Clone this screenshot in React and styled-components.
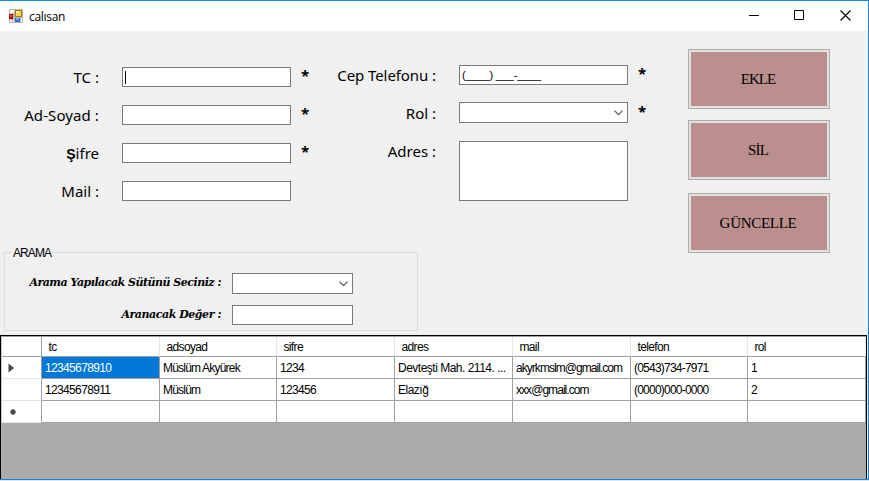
import React from "react";
import styled, { createGlobalStyle } from "styled-components";

const Global = createGlobalStyle`
  * { box-sizing: border-box; }
  body { margin: 0; overflow: hidden; background: #f0f0f0; }
`;

const Window = styled.div`
  width: 869px;
  height: 481px;
  display: flex;
  flex-direction: column;
  background: #f0f0f0;
  border-top: 1px solid #1883d7;
  border-right: 1px solid #1883d7;
  color: #000;
  font-family: "Liberation Sans", sans-serif;
`;

const TitleBar = styled.header`
  height: 30px;
  flex: none;
  display: flex;
  align-items: center;
  background: #fff;
  padding-left: 9px;
`;

const Title = styled.span`
  flex: 1;
  margin-left: 6px;
  padding-top: 1px;
  font: 12px/16px "Open Sans", sans-serif;
  letter-spacing: -0.3px;
`;

const WindowButton = styled.span`
  width: 46px;
  height: 30px;
  display: flex;
  align-items: center;
  justify-content: center;
`;

const Form = styled.main`
  height: 221px;
  flex: none;
  display: grid;
  grid-template-columns: 337px 351px 142px;
`;

const Column = styled.section`
  display: flex;
  flex-direction: column;
  gap: 18px;
  padding-top: ${(p) => p.$top}px;
`;

const Field = styled.div`
  display: grid;
  grid-template-columns: 99px 169px 1fr;
  column-gap: 23px;
  height: 20px;
`;

const Label = styled.label`
  font: 15px/20px "Noto Sans", sans-serif;
  letter-spacing: ${(p) => p.$track || 0}px;
  text-align: right;
  white-space: nowrap;
`;

const Initial = styled.span`
  font-family: "Liberation Sans", sans-serif;
  font-weight: 700;
  font-size: 14px;
`;

const TextBox = styled.div`
  height: ${(p) => p.$height || 20}px;
  margin-top: ${(p) => p.$shift || 0}px;
  display: flex;
  align-items: center;
  justify-content: ${(p) => (p.$combo ? "flex-end" : "flex-start")};
  padding: 0 ${(p) => (p.$combo ? 4 : 2)}px;
  background: #fff;
  border: 1px solid #7a7a7a;
  font-size: 11px;
  letter-spacing: -0.15px;
  white-space: pre;
`;

const Caret = styled.i`
  width: 1px;
  height: 13px;
  background: #000;
`;

const Star = styled.span`
  margin-left: -13px;
  font: 700 15px/16px "Noto Sans", sans-serif;
`;

const Actions = styled.nav`
  display: grid;
  grid-template-rows: 60px 60px 60px;
  row-gap: 12px;
  padding-top: 18px;
  align-content: start;
`;

const ActionButton = styled.button`
  width: 142px;
  height: 60px;
  margin: ${(p) => p.$shift || 0}px 0 0;
  padding: 0 2px 0 0;
  background: #bc8f8f;
  border: 1px solid #adadad;
  box-shadow: inset 0 0 0 2px #e1e1e1;
  color: #000;
  font: 15px/20px "Liberation Serif", serif;
  letter-spacing: ${(p) => p.$track}px;
`;

const Search = styled.fieldset`
  width: 414px;
  height: 85px;
  flex: none;
  margin: -6px 0 4px 4px;
  padding: 14px 0 0;
  border: 1px solid #dcdcdc;
  min-width: 0;
  display: flex;
  flex-direction: column;
  gap: 11px;
`;

const Legend = styled.legend`
  margin-left: 6px;
  padding: 1px 2px 0;
  height: 13px;
  font-size: 12px;
  line-height: 13px;
  letter-spacing: -0.9px;
`;

const SearchField = styled.div`
  display: grid;
  grid-template-columns: 216px 121px;
  column-gap: 11px;
`;

const SearchLabel = styled.label`
  font: italic 700 11px/19px "DejaVu Serif", serif;
  letter-spacing: ${(p) => p.$track}px;
  text-align: right;
  white-space: nowrap;
`;

const GridArea = styled.div`
  width: 867px;
  height: 144px;
  flex: none;
  background: #ababab;
  border: solid #000;
  border-width: 1px 1px 0 1px;
`;

const Table = styled.div`
  display: grid;
  grid-template-columns: 40px 118px 117px 118px 118px 118px 117px 118px;
  grid-template-rows: 20px 22px 22px 22px;
  width: 865px;
  border-top: 1px solid #a0a0a0;
  border-left: 1px solid #c8c8c8;
`;

const Cell = styled.div`
  display: flex;
  align-items: center;
  overflow: hidden;
  padding: 1px 0 0 ${(p) => (p.$head ? 6.5 : 3)}px;
  white-space: nowrap;
  font-size: 12px;
  line-height: 16px;
  letter-spacing: ${(p) => p.$track}px;
  color: ${(p) => (p.$selected ? "#fff" : "#000")};
  background: ${(p) => (p.$selected ? "#0078d7" : "#fff")};
  border-right: 1px solid ${(p) => (p.$head ? "#e5e5e5" : "#a0a0a0")};
  border-bottom: 1px solid #a0a0a0;
`;

const RowHead = styled.div`
  display: flex;
  align-items: center;
  padding-left: 6px;
  background: #fff;
  border-right: 1px solid #a0a0a0;
  border-bottom: 1px solid ${(p) => (p.$dark ? "#a0a0a0" : "#e5e5e5")};
`;

const BottomEdge = styled.footer`
  height: 2px;
  flex: none;
  width: 869px;
  background: #e4e4e4;
  border-top: 1px solid #1883d7;
`;

const AppIcon = () => (
  <svg width="14" height="14" viewBox="0 0 14 14" shapeRendering="crispEdges">
    <path fill="#b8b8b8" d="M0 0h14v14H0z" />
    <path fill="#fff" d="M1 1h4v3H1zM1 11h2v2H1zM4 11h1v2H4zM12 9h1v4h-1z" />
    <path fill="#a11212" d="M0 5h4v5H0z" />
    <path fill="#e2574c" d="M1 6h2v2H1z" />
    <path fill="#a8780a" d="M6 1h7v7H6z" />
    <path fill="#ffd34d" d="M7 2h5v5H7z" />
    <path fill="#ffeaa0" d="M7 2h3v2H7z" />
    <path fill="#3569c7" d="M6 9h5v4H6z" />
    <path fill="#76a5f4" d="M7 9h3v2H7z" />
  </svg>
);

const Chevron = () => (
  <svg width="9" height="6" viewBox="0 0 9 6" fill="none" stroke="#555" strokeWidth="1.2">
    <path d="M.5 .7l4 4 4-4" />
  </svg>
);

const headers = ["tc", "adsoyad", "sifre", "adres", "mail", "telefon", "rol"];
const rows = [
  ["12345678910", "Müslüm Akyürek", "1234", "Devteşti Mah. 2114. ...", "akyrkmslm@gmail.com", "(0543)734-7971", "1"],
  ["12345678911", "Müslüm", "123456", "Elazığ", "xxx@gmail.com", "(0000)000-0000", "2"],
  ["", "", "", "", "", "", ""],
];

// Letter spacing of the data cells, one value per column.
const tracking = [-0.65, -0.8, -0.65, -0.5, -0.95, -0.78, -0.6];

const rowMarks = [
  <svg key="current" width="6" height="10" viewBox="0 0 6 10"><path fill="#444" d="M0.5 0.5l5.5 4.5-5.5 4.5z" /></svg>,
  null,
  <svg key="new" width="10" height="8" viewBox="0 0 10 8"><path stroke="#444" strokeWidth="1.3" d="M5 1v6M2.2 4h5.6M3 2l4 4M7 2L3 6" /></svg>,
];

export default function App() {
  return (
    <>
      <Global />
      <Window>
        <TitleBar>
          <AppIcon />
          <Title>calısan</Title>
          <WindowButton>
            <svg width="12" height="10"><path stroke="#000" d="M2 4.5h10" /></svg>
          </WindowButton>
          <WindowButton>
            <svg width="10" height="12"><path stroke="#000" fill="none" d="M.5.5h9v9h-9z" /></svg>
          </WindowButton>
          <WindowButton>
            <svg width="12" height="12"><path stroke="#000" strokeWidth="1.1" d="M1.5.5l10 10M11.5.5l-10 10" /></svg>
          </WindowButton>
        </TitleBar>

        <Form>
          <Column $top={36}>
            <Field><Label>TC :</Label><TextBox><Caret /></TextBox><Star>*</Star></Field>
            <Field><Label $track={0.1}>Ad-Soyad :</Label><TextBox /><Star>*</Star></Field>
            <Field><Label><Initial>Ş</Initial>ifre</Label><TextBox /><Star>*</Star></Field>
            <Field><Label>Mail :</Label><TextBox /></Field>
          </Column>
          <Column $top={34}>
            <Field><Label $track={-0.08}>Cep Telefonu :</Label><TextBox>(____) ___-____</TextBox><Star>*</Star></Field>
            <Field><Label>Rol :</Label><TextBox $combo $height={21} $shift={-1}><Chevron /></TextBox><Star>*</Star></Field>
            <Field><Label>Adres :</Label><TextBox $height={60} /></Field>
          </Column>
          <Actions>
            <ActionButton $track={-0.9}>EKLE</ActionButton>
            <ActionButton $track={-0.8} $shift={-1}>SİL</ActionButton>
            <ActionButton $track={-0.3}>GÜNCELLE</ActionButton>
          </Actions>
        </Form>

        <Search>
          <Legend>ARAMA</Legend>
          <SearchField>
            <SearchLabel $track={-0.5}>Arama Yapılacak Sütünü Seciniz :</SearchLabel>
            <TextBox $combo $height={21}><Chevron /></TextBox>
          </SearchField>
          <SearchField>
            <SearchLabel $track={-0.45}>Aranacak Değer :</SearchLabel>
            <TextBox />
          </SearchField>
        </Search>

        <GridArea>
          <Table>
            <RowHead $dark />
            {headers.map((h) => <Cell key={h} $head $track={-0.65}>{h}</Cell>)}
            {rows.map((row, r) => (
              <React.Fragment key={r}>
                <RowHead>{rowMarks[r]}</RowHead>
                {row.map((v, c) => <Cell key={c} $track={tracking[c]} $selected={r === 0 && c === 0}>{v}</Cell>)}
              </React.Fragment>
            ))}
          </Table>
        </GridArea>
        <BottomEdge />
      </Window>
    </>
  );
}
